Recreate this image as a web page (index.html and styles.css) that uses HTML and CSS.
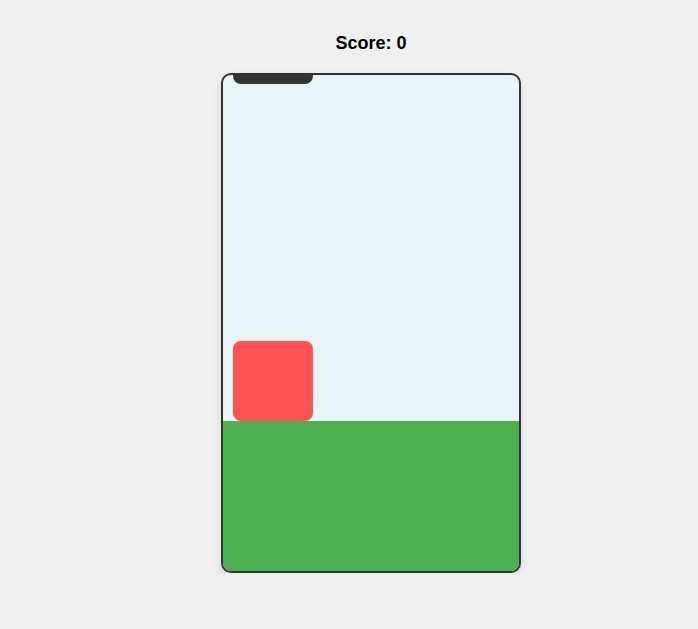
FILE: index.html
```html
<!DOCTYPE html>
<html>
<head>
<meta charset="utf-8">
<link rel="stylesheet" href="styles.css">
</head>
<body>
<div class="page">
  <div class="score">Score: 0</div>
  <div class="game">
    <div class="sky">
      <div class="obstacle"></div>
      <div class="player"></div>
    </div>
    <div class="ground"></div>
  </div>
</div>
</body>
</html>
```
FILE: styles.css
```css
html, body {
  margin: 0;
  padding: 0;
  background: #f0f0f0;
  font-family: "Liberation Sans", Arial, sans-serif;
}
.page {
  display: flex;
  flex-direction: column;
  align-items: center;
  padding-top: 30px;
  padding-left: 44px;
  gap: 17px;
}
.score {
  font-size: 18px;
  font-weight: bold;
  line-height: 26px;
  color: #000;
}
.game {
  box-sizing: border-box;
  width: 300px;
  height: 500px;
  border: 2px solid #333;
  border-radius: 10px;
  background: #e8f4f8;
  box-shadow: 0 4px 10px rgba(0, 0, 0, 0.1);
  display: flex;
  flex-direction: column;
}
.sky {
  position: relative;
  flex: 1;
  border-radius: 8px 8px 0 0;
}
.ground {
  height: 150px;
  background: #4caf50;
  border-radius: 0 0 8px 8px;
}
.obstacle {
  position: absolute;
  left: 10px;
  top: -2px;
  width: 80px;
  height: 11px;
  background: #333;
  border-radius: 0 0 8px 8px;
}
.player {
  position: absolute;
  left: 10px;
  bottom: 0;
  width: 80px;
  height: 80px;
  background: #ff5252;
  border-radius: 8px;
}
```
